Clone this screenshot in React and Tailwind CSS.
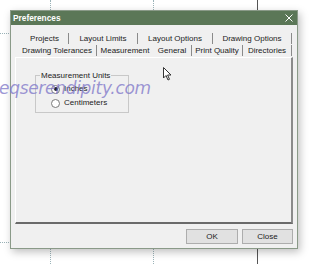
import React from 'react';

const back = [
  { label: 'Projects', w: 48 },
  { label: 'Layout Limits', w: 69 },
  { label: 'Layout Options', w: 75 },
  { label: 'Drawing Options', w: 79 },
];

const front = [
  { label: 'Drawing Tolerances', w: 79 },
  { label: 'Measurement', w: 56, active: true },
  { label: 'General', w: 39 },
  { label: 'Print Quality', w: 51 },
  { label: 'Directories', w: 49 },
];

function Radio({ checked, label }) {
  return (
    <div className="flex items-center gap-[4px] h-[14px]">
      <span className="w-[9px] h-[9px] rounded-full border border-[#7a7a7a] bg-white flex items-center justify-center">
        {checked && <span className="w-[4px] h-[4px] rounded-full bg-[#222]" />}
      </span>
      <span>{label}</span>
    </div>
  );
}

export default function App() {
  return (
    <div className="relative w-[320px] h-[264px] bg-white overflow-hidden text-[#222] font-['Liberation_Sans',Arial,sans-serif]">
      {/* page guide lines behind the dialog */}
      <div className="absolute left-[50px] top-0 h-[264px] border-l border-dotted border-[#9bb3b8]" />
      <div className="absolute left-[153px] top-0 h-[264px] border-l border-dotted border-[#9bb3b8]" />
      <div className="absolute left-[257px] top-0 h-[264px] border-l border-[#555]" />
      <div className="absolute left-0 top-[33px] w-[9px] border-t border-dotted border-[#9bb3b8]" />
      <div className="absolute left-0 top-[242px] w-[9px] border-t border-dotted border-[#9bb3b8]" />

      {/* dialog */}
      <div className="relative ml-[10px] mt-[10px] w-[288px] h-[239px] bg-[#f0f0f0] border border-[#8a9a88] shadow-[2px_3px_8px_rgba(0,0,0,0.25)] flex flex-col">
        <div className="h-[14px] bg-[#5b7757] flex items-center justify-between pl-[2px] pr-[4px]">
          <span className="text-white font-bold text-[8.3px]">Preferences</span>
          <svg width="8" height="8" viewBox="0 0 8 8" className="stroke-white" strokeWidth="1">
            <path d="M0.5 0.5 L7.5 7.5 M7.5 0.5 L0.5 7.5" />
          </svg>
        </div>

        <div className="flex flex-col px-[4px] pt-[7px] text-[8px]">
          <div className="flex h-[12px] pl-[6px]">
            {back.map((t) => (
              <div
                key={t.label}
                style={{ width: t.w }}
                className="flex items-center justify-center border-r border-[#8a8a8a] h-[11px] mt-[1px]"
              >
                {t.label}
              </div>
            ))}
          </div>
          <div className="flex h-[13px] pl-[3px]">
            {front.map((t) => (
              <div
                key={t.label}
                style={{ width: t.w }}
                className={
                  t.active
                    ? 'flex items-start justify-center pt-[1px] bg-[#f0f0f0]'
                    : 'flex items-center justify-center border-r border-[#8a8a8a] h-[11px] mt-[1px]'
                }
              >
                {t.label}
              </div>
            ))}
          </div>
        </div>

        <div className="mx-[4px] h-[167px] border-l border-t border-white border-r-2 border-b-2 border-r-[#8a8a8a] border-b-[#6a6a6a] pt-[17px] pl-[19px]">
          <div className="relative w-[94px] h-[38px] border border-[#c8c8c8] pt-[6px] pl-[15px] text-[8px]">
            <span className="absolute -top-[6px] left-[4px] bg-[#f0f0f0] px-[1px]">Measurement Units</span>
            <Radio checked label="Inches" />
            <Radio label="Centimeters" />
          </div>
        </div>

        <div className="flex justify-end gap-[4px] pr-[4px] pt-[5px] text-[8px]">
          <button className="w-[52px] h-[15px] bg-[#e1e1e1] border border-[#adadad]">OK</button>
          <button className="w-[51px] h-[15px] bg-[#e1e1e1] border border-[#adadad]">Close</button>
        </div>
      </div>

      {/* watermark overlay */}
      <div className="absolute left-[-1px] top-[80px] italic leading-none text-[17px] text-[#7c74c8]/75 font-['DejaVu_Sans',sans-serif] tracking-[-0.3px]">
        eqserendipity.com
      </div>

      {/* mouse cursor */}
      <svg className="absolute left-[163px] top-[67px]" width="9" height="14" viewBox="0 0 9 14">
        <path d="M0.5 0.5 L0.5 11 L3 8.5 L5 13 L6.5 12.3 L4.6 8 L8 8 Z" fill="white" stroke="#333" strokeWidth="1" />
      </svg>
    </div>
  );
}
